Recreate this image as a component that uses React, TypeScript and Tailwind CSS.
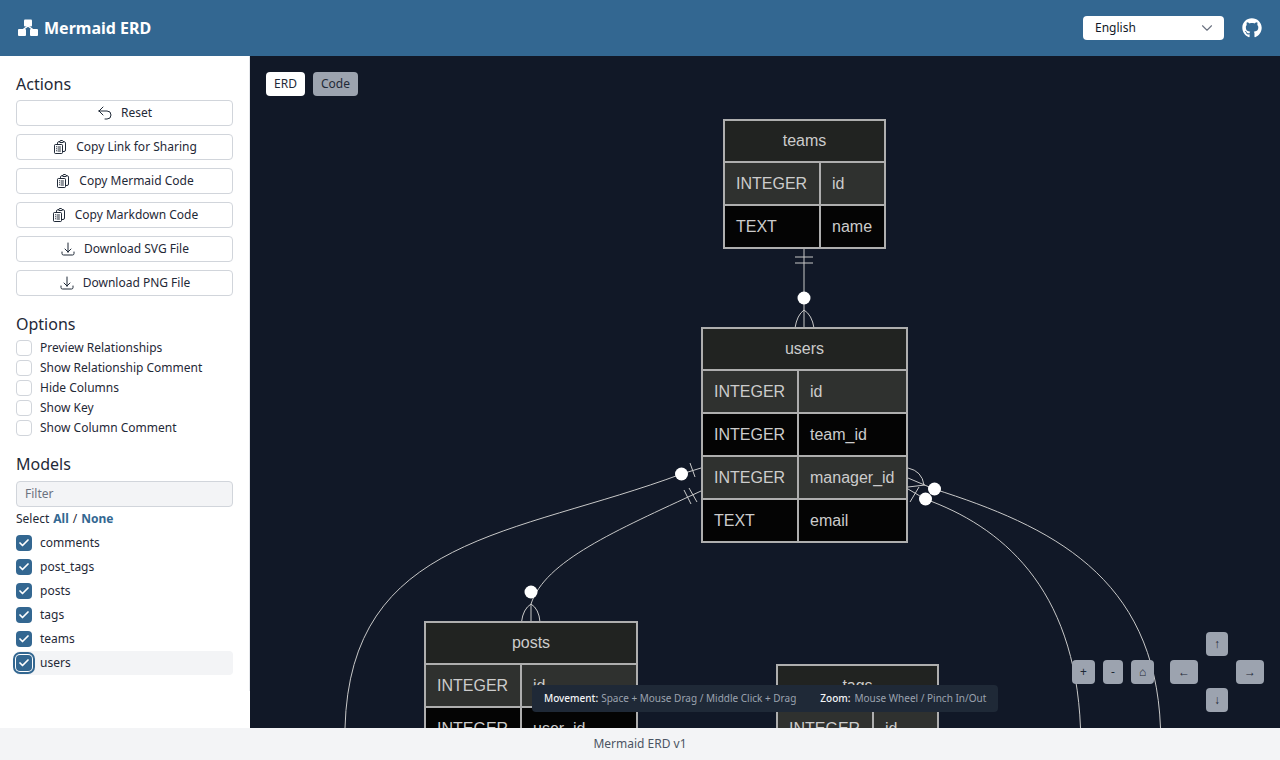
import React from 'react';
import { FaGithub } from 'react-icons/fa';
import { HiOutlineArrowUturnLeft, HiOutlineArrowDownTray, HiOutlineClipboardDocumentList } from 'react-icons/hi2';
import { ChevronDown, Check } from 'lucide-react';

const uiFont = { fontFamily: '"Noto Sans", sans-serif' };

const actions = [
  { label: 'Reset', icon: 'reset' },
  { label: 'Copy Link for Sharing', icon: 'copy' },
  { label: 'Copy Mermaid Code', icon: 'copy' },
  { label: 'Copy Markdown Code', icon: 'copy' },
  { label: 'Download SVG File', icon: 'download' },
  { label: 'Download PNG File', icon: 'download' },
];

const options = ['Preview Relationships', 'Show Relationship Comment', 'Hide Columns', 'Show Key', 'Show Column Comment'];
const models = ['comments', 'post_tags', 'posts', 'tags', 'teams', 'users'];

interface EntityProps {
  name: string;
  x: number;
  y: number;
  width: number;
  rows: [string, string][];
}

// one ER box, placed on the canvas by its own coordinates
const Entity: React.FC<EntityProps> = ({ name, x, y, width, rows }) => (
  <div
    className="absolute border-2 border-[#aeaeae] bg-[#212321] text-[16px] text-[#cccccc]"
    style={{ left: x, top: y, width, fontFamily: '"Liberation Sans", sans-serif' }}
  >
    <div className="h-[40px] flex items-center justify-center">{name}</div>
    {rows.map(([type, col], i) => (
      <div key={col} className={`flex h-[43px] border-t-2 border-[#aeaeae] ${i % 2 === 0 ? 'bg-[#2f312f]' : 'bg-[#040404]'}`}>
        <div className="w-[96px] shrink-0 flex items-center pl-[11px] border-r-2 border-[#aeaeae]">{type}</div>
        <div className="flex items-center pl-[11px] flex-1">{col}</div>
      </div>
    ))}
  </div>
);

const PadButton: React.FC<{ label: string; className: string }> = ({ label, className }) => (
  <button className={`absolute flex items-center justify-center rounded bg-[#9ca3af] text-xs text-[#1f2937] ${className}`}>{label}</button>
);

const Logo = () => (
  <svg width="20" height="18" viewBox="0 0 20 18" fill="currentColor">
    <rect x="6" y="0.5" width="8" height="7" rx="1" />
    <rect x="0" y="10" width="8" height="7" rx="1" />
    <rect x="12" y="10" width="8" height="7" rx="1" />
    <path d="M10 7 L4.5 11 M10 7 L15.5 11" stroke="currentColor" strokeWidth="1.4" fill="none" />
  </svg>
);

const Diagram = () => (
  <svg className="absolute left-0 top-0" width="1030" height="672" fill="none" stroke="#c8c8c8" strokeWidth="1">
    {/* teams - users */}
    <path d="M554 192 V272" />
    <path d="M545 201 H563 M545 207 H563" />
    <path d="M545 272 Q547 259 554 254 Q562 259 564 272" />
    <circle cx="554" cy="242" r="6.5" fill="#fff" stroke="none" />

    {/* users - posts */}
    <path d="M451 435 C365 475 295 505 281 548" />
    <path d="M271.5 566 Q273 553 281 548 Q289 553 290 566" />
    <path d="M281 548 V566" />
    <path d="M434 434 L441 448 M439 432 L447 446" />
    <circle cx="281" cy="536" r="6.5" fill="#fff" stroke="none" />

    {/* users - comments */}
    <path d="M451 412 L431.5 418 C265 480 100 480 95 672" />
    <path d="M440 407 L445 421" />
    <circle cx="431.5" cy="418" r="6.5" fill="#fff" stroke="none" />

    {/* users - right side links */}
    <path d="M658 412 Q672 415 674 429" />
    <path d="M658 422 L684 433 C800 470 905 520 910.5 672" />
    <path d="M658 431 L675 429" />
    <path d="M658 433 L675 443 C750 470 825 530 830.5 672" />
    <path d="M660 446 L669 431" />
    <circle cx="684.5" cy="433" r="6.5" fill="#fff" stroke="none" />
    <circle cx="675.5" cy="443" r="6.5" fill="#fff" stroke="none" />
  </svg>
);

export default function App() {
  return (
    <div className="h-[760px] flex flex-col overflow-hidden text-[#1f2937]" style={uiFont}>
      <header className="h-14 shrink-0 bg-[#336791] flex items-center justify-between pl-[18px] pr-[18px] text-white">
        <div className="flex items-center gap-[6px]">
          <Logo />
          <span className="text-base font-bold">Mermaid ERD</span>
        </div>
        <div className="flex items-center gap-[18px]">
          <div className="w-[141px] h-6 bg-white rounded flex items-center justify-between pl-3 pr-2 text-xs text-[#111827]">
            <span>English</span>
            <ChevronDown className="w-[18px] h-[18px] text-[#6b7280]" strokeWidth={1.5} />
          </div>
          <FaGithub className="w-5 h-5" />
        </div>
      </header>

      <div className="flex-1 flex min-h-0">
        <aside className="w-[250px] shrink-0 bg-white">
          <div className="h-[635px] border-r border-[#e5e7eb] pt-4 px-4">
            <div className="w-[217px]">
              <h2 className="text-base mb-1">Actions</h2>
              <div className="flex flex-col gap-2">
                {actions.map((a) => (
                  <button key={a.label} className="h-[26px] flex items-center justify-center gap-2 rounded border border-[#d1d5db] bg-white text-xs">
                    {a.icon === 'reset' && <HiOutlineArrowUturnLeft className="w-4 h-4" />}
                    {a.icon === 'copy' && <HiOutlineClipboardDocumentList className="w-4 h-4" />}
                    {a.icon === 'download' && <HiOutlineArrowDownTray className="w-4 h-4" />}
                    {a.label}
                  </button>
                ))}
              </div>

              <h2 className="text-base mt-4 mb-1">Options</h2>
              <div className="flex flex-col">
                {options.map((o) => (
                  <div key={o} className="h-5 flex items-start gap-2 text-xs">
                    <span className="w-4 h-4 rounded border border-[#d1d5db] bg-white shrink-0" />
                    <span className="leading-4">{o}</span>
                  </div>
                ))}
              </div>

              <h2 className="text-base mt-3 mb-[5px]">Models</h2>
              <div className="h-[26px] rounded border border-[#d1d5db] bg-[#f3f4f6] flex items-center px-2 text-xs text-[#6b7280]">Filter</div>
              <div className="mt-1 h-4 text-xs leading-4 flex gap-1">
                <span>Select</span>
                <span className="font-bold text-[#336791]">All</span>
                <span>/</span>
                <span className="font-bold text-[#336791]">None</span>
              </div>
              <div className="mt-1 flex flex-col">
                {models.map((m) => (
                  <div key={m} className={`h-6 flex items-center gap-2 text-xs rounded ${m === 'users' ? 'bg-[#f3f4f6]' : ''}`}>
                    <span className={`w-4 h-4 rounded bg-[#336791] flex items-center justify-center shrink-0 text-white ${m === 'users' ? 'ring-2 ring-[#336791] ring-offset-1' : ''}`}>
                      <Check className="w-3 h-3" strokeWidth={3.5} />
                    </span>
                    {m}
                  </div>
                ))}
              </div>
            </div>
          </div>
        </aside>

        <main className="flex-1 relative bg-[#111827] overflow-hidden">
          <Diagram />
          <Entity name="teams" x={473} y={63} width={163} rows={[['INTEGER', 'id'], ['TEXT', 'name']]} />
          <Entity name="users" x={451} y={271} width={207} rows={[['INTEGER', 'id'], ['INTEGER', 'team_id'], ['INTEGER', 'manager_id'], ['TEXT', 'email']]} />
          <Entity name="posts" x={174} y={565} width={214} rows={[['INTEGER', 'id'], ['INTEGER', 'user_id'], ['TEXT', 'title']]} />
          <Entity name="tags" x={526} y={608} width={163} rows={[['INTEGER', 'id'], ['TEXT', 'name']]} />

          <div className="absolute left-4 top-4 flex gap-2 text-xs">
            <button className="h-6 px-2 rounded bg-white">ERD</button>
            <button className="h-6 px-2 rounded bg-[#9ca3af]">Code</button>
          </div>

          <div className="absolute left-[282px] top-[629px] h-[27px] w-[466px] rounded bg-[#1f2937] flex items-center pl-3 text-[10px] text-[#9ca3af]">
            <span className="font-medium text-[#f3f4f6] mr-[3px]">Movement:</span>
            <span>Space + Mouse Drag / Middle Click + Drag</span>
            <span className="font-medium text-[#f3f4f6] ml-6 mr-1">Zoom:</span>
            <span>Mouse Wheel / Pinch In/Out</span>
          </div>

          <PadButton label="+" className="left-[822px] top-[604px] w-[23px] h-6" />
          <PadButton label="-" className="left-[853px] top-[604px] w-5 h-6" />
          <PadButton label="⌂" className="left-[881px] top-[604px] w-[23px] h-6" />
          <PadButton label="←" className="left-[920px] top-[604px] w-7 h-6" />
          <PadButton label="→" className="left-[986px] top-[604px] w-7 h-6" />
          <PadButton label="↑" className="left-[956px] top-[576px] w-[22px] h-6" />
          <PadButton label="↓" className="left-[956px] top-[632px] w-[22px] h-6" />
        </main>
      </div>

      <footer className="h-8 shrink-0 bg-[#f3f4f6] flex items-center justify-center text-xs text-[#4b5563]">Mermaid ERD v1</footer>
    </div>
  );
}
